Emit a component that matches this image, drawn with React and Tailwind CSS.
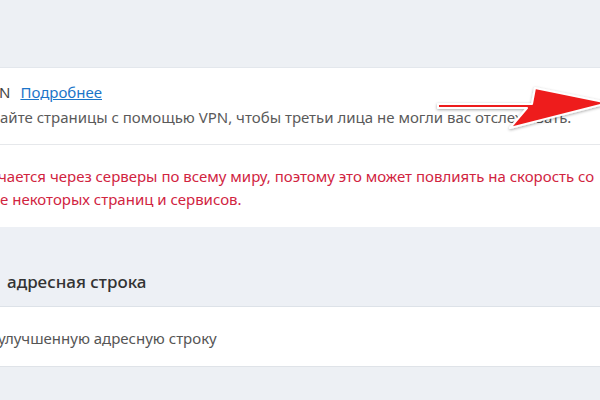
import React from 'react';

function Arrow() {
    return (
        <svg className="absolute left-[430px] top-[80px]" width="180" height="56" viewBox="0 0 180 56">
            <defs>
                <filter id="sh" x="-10%" y="-30%" width="120%" height="160%">
                    <feDropShadow dx="0" dy="1" stdDeviation="1.5" floodColor="#000" floodOpacity="0.35" />
                </filter>
            </defs>
            <g filter="url(#sh)">
                <path d="M8 24 L102 24 L105 8 L178 23 L80 48 L97 28 L8 28 Z" fill="#ee1c1c" stroke="#fff" strokeWidth="2" strokeLinejoin="round" />
            </g>
        </svg>
    );
}

export default function App() {
    return (
        <div
            className="relative w-[600px] h-[400px] overflow-hidden bg-[#edf0f4]"
            style={{ fontFamily: '"Noto Sans", "Open Sans", sans-serif' }}
        >
            <div className="h-[68px] border-b border-[#e3e7ec]" />
            <div className="bg-white">
                <div className="pt-[12px] pb-[14px] border-b border-[#e6e8eb] text-[15px] leading-[25px]">
                    <div className="flex gap-[10px] text-[#444]">
                        <span className="-ml-[1px]">N</span>
                        <span className="text-[#1b75c9] underline">Подробнее</span>
                    </div>
                    <div className="text-[#5a5a5a] whitespace-nowrap">
                        айте страницы с помощью VPN, чтобы третьи лица не могли вас отслеживать.
                    </div>
                </div>
                <div className="pt-[20px] pb-[16px] text-[15px] leading-[23px] text-[#d1243f] whitespace-nowrap">
                    <div className="-ml-[2px]">чается через серверы по всему миру, поэтому это может повлиять на скорость со</div>
                    <div>е некоторых страниц и сервисов.</div>
                </div>
            </div>
            <div className="h-[80px] flex items-center pl-[7px] border-b border-[#dde2e8] bg-[#edf0f5] text-[17px] font-medium text-[#333]">
                <span className="mt-[30px]">адресная строка</span>
            </div>
            <div className="h-[60px] bg-white flex items-center text-[15px] text-[#555] border-b border-[#dfe3e8]">
                <span className="-ml-[2px] mt-[4px]">улучшенную адресную строку</span>
            </div>
            <Arrow />
        </div>
    );
}
